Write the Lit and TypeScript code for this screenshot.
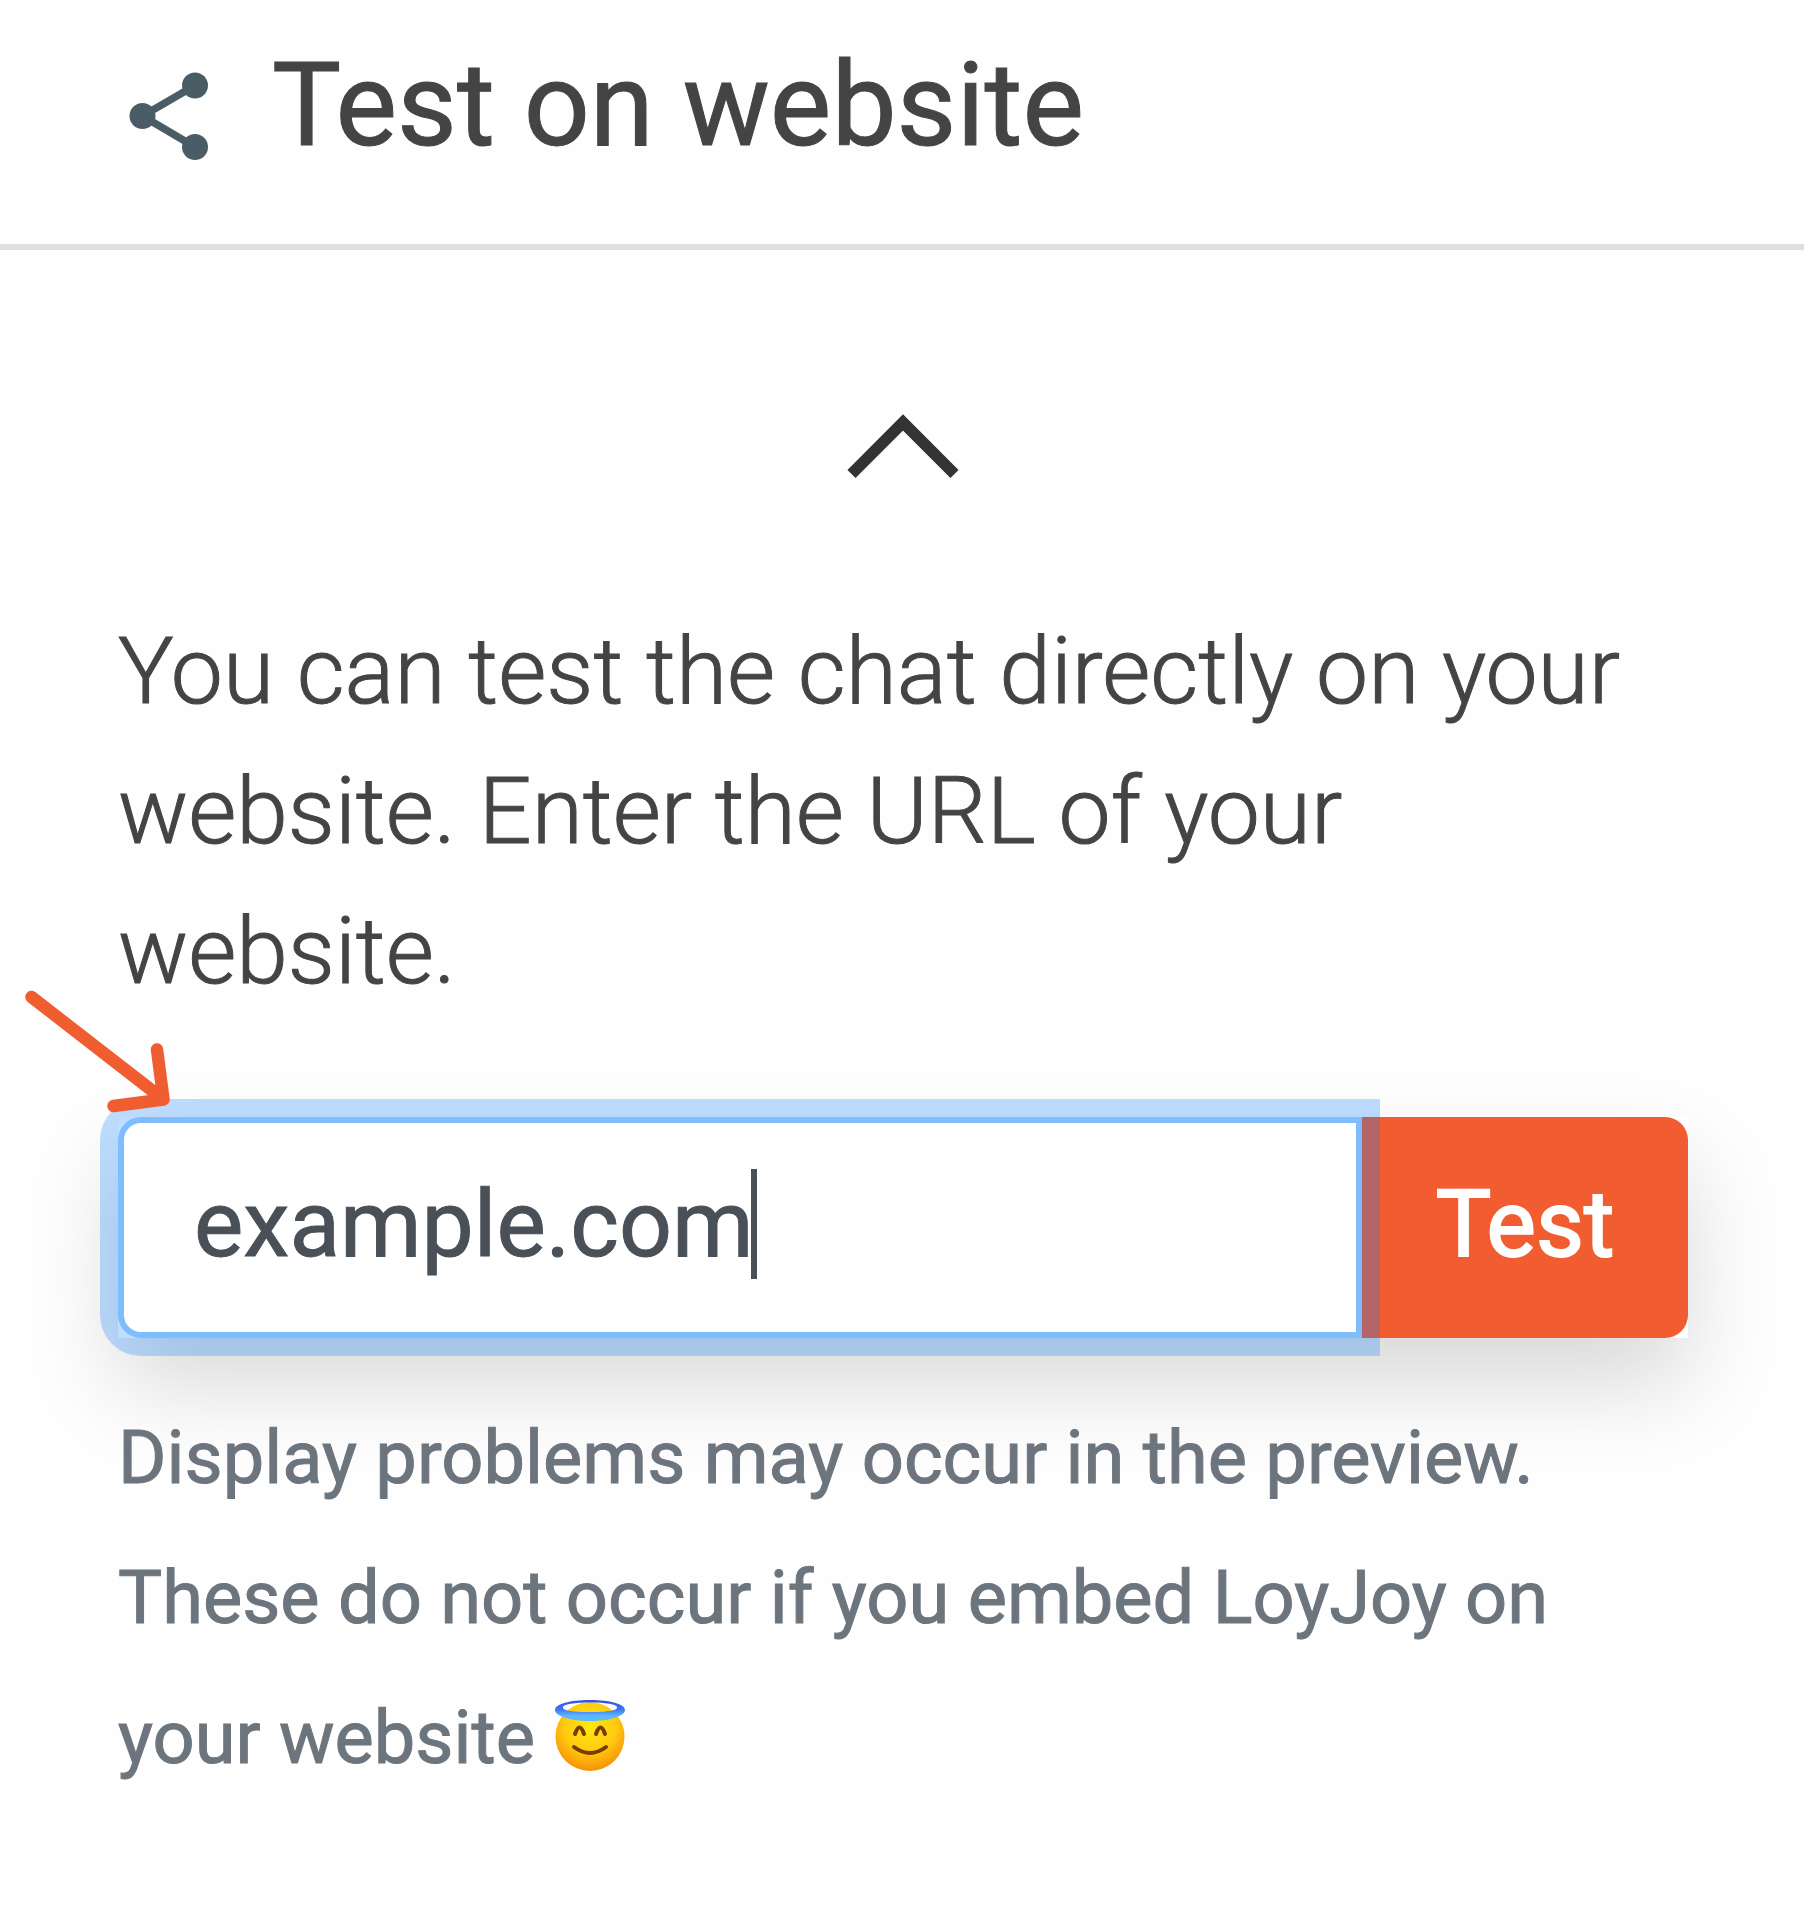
import { LitElement, html, css } from "lit";
import { customElement, state } from "lit/decorators.js";

@customElement("app-root")
export class AppRoot extends LitElement {
  static styles = css`
    :host {
      display: block;
      min-height: 100vh;
      overflow: hidden;
      background: #fefefe;
      color: #444;
      font-family: Roboto, "Liberation Sans", sans-serif;
      -webkit-text-stroke: 1px currentColor;
    }
    .header {
      display: flex;
      align-items: flex-start;
      gap: 48px;
      padding: 35px 116px 69px;
      border-bottom: 6px solid #dfdfdf;
    }
    .share {
      flex: none;
      width: 108px;
      height: 108px;
      margin-top: 27px;
    }
    .title {
      margin: 0;
      font-size: 116px;
      font-weight: 400;
      line-height: 140px;
    }
    .body {
      padding: 140px 116px 140px 118px;
    }
    .toggle {
      display: block;
      margin: 0 auto;
      padding: 0;
      border: 0;
      background: none;
      height: 112px;
      cursor: pointer;
    }
    .chevron {
      display: block;
      width: 140px;
      height: 112px;
    }
    .intro {
      display: block;
      padding-top: 100px;
      font-size: 93px;
      font-weight: 300;
      line-height: 140px;
    }
    .group {
      position: relative;
      display: flex;
      height: 221px;
      margin-top: 95px;
      background: #fff;
      box-shadow: 0 47px 93px rgba(0, 0, 0, 0.15);
    }
    .field {
      position: relative;
      z-index: 1;
      flex: 1;
      display: flex;
      min-width: 0;
    }
    .input {
      box-sizing: border-box;
      flex: 1;
      min-width: 0;
      padding: 0 70px 6px;
      border: 6px solid #80bdff;
      border-radius: 23px 0 0 23px;
      outline: 0;
      background: #fff;
      box-shadow: 0 0 0 18px rgba(0, 123, 255, 0.25);
      color: #495057;
      caret-color: transparent;
      font: 400 93px / 140px Roboto, "Liberation Sans", sans-serif;
      -webkit-text-stroke: 1px currentColor;
    }
    .caret {
      position: absolute;
      left: 633px;
      top: 52px;
      width: 6px;
      height: 110px;
      background: #495057;
    }
    .submit {
      flex: none;
      width: 326px;
      padding: 0 0 6px;
      border: 0;
      border-radius: 0 23px 23px 0;
      background: #f15d30;
      color: #fff;
      font: 400 93px / 140px Roboto, "Liberation Sans", sans-serif;
      -webkit-text-stroke: 2px currentColor;
      cursor: pointer;
    }
    .arrow {
      position: absolute;
      z-index: 2;
      left: -97px;
      top: -137px;
      width: 150px;
      height: 140px;
      pointer-events: none;
    }
    .note {
      position: relative;
      margin: 0;
      padding-top: 50px;
      color: #6c757d;
      font-size: 74px;
      line-height: 140px;
    }
    .emoji {
      width: 74px;
      height: 74px;
      vertical-align: -10px;
    }
  `;

  @state() private open = true;
  @state() private url = "example.com";

  render() {
    return html`
      <header class="header">
        <svg class="share" viewBox="0 0 108 108" aria-hidden="true">
          <g fill="#4a5c66" stroke="#4a5c66">
            <path d="M79 23.500 26.500 54 79 85" fill="none" stroke-width="7.500" />
            <circle cx="26.500" cy="54" r="13" stroke="none" />
            <circle cx="79" cy="23.500" r="13" stroke="none" />
            <circle cx="79" cy="85" r="13" stroke="none" />
          </g>
        </svg>
        <h1 class="title">Test on website</h1>
      </header>
      <main class="body">
        <button
          class="toggle"
          type="button"
          aria-label="Toggle section"
          aria-expanded=${this.open ? "true" : "false"}
          @click=${() => (this.open = !this.open)}
        >
          <svg class="chevron" viewBox="0 0 140 112" aria-hidden="true">
            <path d="M18.500 84 70 32.500 121.500 84" fill="none" stroke="#333" stroke-width="11.500" />
          </svg>
        </button>
        ${this.open ? this.renderForm() : null}
      </main>
    `;
  }

  private renderForm() {
    return html`
      <label class="intro" for="url">You can test the chat directly on your website. Enter the URL of your website.</label>
      <form class="group" @submit=${(e: Event) => e.preventDefault()}>
        <div class="field">
          <input
            class="input"
            id="url"
            type="text"
            .value=${this.url}
            @input=${(e: Event) => (this.url = (e.target as HTMLInputElement).value)}
          />
          <span class="caret"></span>
        </div>
        <button class="submit" type="submit">Test</button>
        <svg class="arrow" viewBox="0 0 150 140" aria-hidden="true">
          <path
            d="M10.500 17 142 119M136 69.500 142.500 119.500 92.500 126"
            fill="none"
            stroke="#f05d30"
            stroke-width="12.500"
            stroke-linecap="round"
            stroke-linejoin="round"
          />
        </svg>
      </form>
      <p class="note">Display problems may occur in the preview. These do not occur if you embed LoyJoy on your website <svg class="emoji" viewBox="0 0 74 74" role="img" aria-label="😇">
          <defs>
            <radialGradient id="face" cx="0.5" cy="0.35" r="0.68">
              <stop offset="0" stop-color="#ffe70d" />
              <stop offset="0.55" stop-color="#ffcb10" />
              <stop offset="1" stop-color="#f58a05" />
            </radialGradient>
            <linearGradient id="halo" x1="0" y1="0" x2="0" y2="1">
              <stop offset="0" stop-color="#2f50e0" />
              <stop offset="0.45" stop-color="#3d74f5" />
              <stop offset="0.75" stop-color="#5cb8ff" />
            </linearGradient>
          </defs>
          <circle cx="37" cy="37.500" r="34.500" fill="url(#face)" />
          <path
            fill="url(#halo)"
            fill-rule="evenodd"
            d="M37 1C57 1 72 5 72 11S57 22 37 22 2 17 2 11 17 1 37 1ZM37 3.500C22 3.500 10 5 10 8.500S22 13 37 13 64 12 64 8.500 52 3.500 37 3.500Z"
          />
          <path
            fill="none"
            stroke="#7a3d00"
            stroke-linecap="round"
            stroke-width="4"
            d="M22 35Q26.500 22 31 35M43 35Q47.500 22 52 35M21 48Q37 60 53 48"
          />
        </svg></p>
    `;
  }
}
